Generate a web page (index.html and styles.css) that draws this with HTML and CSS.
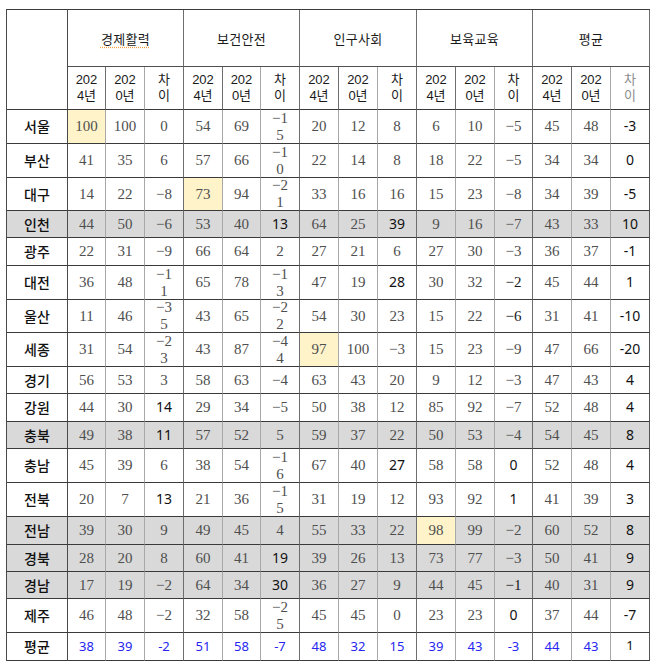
FILE: index.html
```html
<!DOCTYPE html>
<html lang="ko">
<head>
<meta charset="utf-8">
<title>지역별 지표</title>
<link rel="stylesheet" href="styles.css">
</head>
<body>
<div class="sheet">
  <div class="row head">
    <div class="corner"></div>
    <div class="grp"><span class="spell">경제활력</span></div>
    <div class="grp">보건안전</div>
    <div class="grp">인구사회</div>
    <div class="grp">보육교육</div>
    <div class="grp">평균</div>
  </div>
  <div class="row sub">
    <div>202<br>4년</div><div>202<br>0년</div><div>차<br>이</div>
    <div>202<br>4년</div><div>202<br>0년</div><div>차<br>이</div>
    <div>202<br>4년</div><div>202<br>0년</div><div>차<br>이</div>
    <div>202<br>4년</div><div>202<br>0년</div><div>차<br>이</div>
    <div>202<br>4년</div><div>202<br>0년</div><div class="dim">차<br>이</div>
  </div>

  <div class="row">
    <div class="lab">서울</div>
    <div class="y">100</div><div>100</div><div>0</div>
    <div>54</div><div>69</div><div>−1<br>5</div>
    <div>20</div><div>12</div><div>8</div>
    <div>6</div><div>10</div><div>−5</div>
    <div>45</div><div>48</div><div class="k">-3</div>
  </div>
  <div class="row">
    <div class="lab">부산</div>
    <div>41</div><div>35</div><div>6</div>
    <div>57</div><div>66</div><div>−1<br>0</div>
    <div>22</div><div>14</div><div>8</div>
    <div>18</div><div>22</div><div>−5</div>
    <div>34</div><div>34</div><div class="k">0</div>
  </div>
  <div class="row">
    <div class="lab">대구</div>
    <div>14</div><div>22</div><div>−8</div>
    <div class="y">73</div><div>94</div><div>−2<br>1</div>
    <div>33</div><div>16</div><div>16</div>
    <div>15</div><div>23</div><div>−8</div>
    <div>34</div><div>39</div><div class="k">-5</div>
  </div>
  <div class="row sh">
    <div class="lab">인천</div>
    <div>44</div><div>50</div><div>−6</div>
    <div>53</div><div>40</div><div class="k">13</div>
    <div>64</div><div>25</div><div class="k">39</div>
    <div>9</div><div>16</div><div>−7</div>
    <div>43</div><div>33</div><div class="k">10</div>
  </div>
  <div class="row">
    <div class="lab">광주</div>
    <div>22</div><div>31</div><div>−9</div>
    <div>66</div><div>64</div><div>2</div>
    <div>27</div><div>21</div><div>6</div>
    <div>27</div><div>30</div><div>−3</div>
    <div>36</div><div>37</div><div class="k">-1</div>
  </div>
  <div class="row">
    <div class="lab">대전</div>
    <div>36</div><div>48</div><div>−1<br>1</div>
    <div>65</div><div>78</div><div>−1<br>3</div>
    <div>47</div><div>19</div><div class="k">28</div>
    <div>30</div><div>32</div><div class="dk">−2</div>
    <div>45</div><div>44</div><div class="k">1</div>
  </div>
  <div class="row">
    <div class="lab">울산</div>
    <div>11</div><div>46</div><div>−3<br>5</div>
    <div>43</div><div>65</div><div>−2<br>2</div>
    <div>54</div><div>30</div><div>23</div>
    <div>15</div><div>22</div><div class="dk">−6</div>
    <div>31</div><div>41</div><div class="k">-10</div>
  </div>
  <div class="row">
    <div class="lab">세종</div>
    <div>31</div><div>54</div><div>−2<br>3</div>
    <div>43</div><div>87</div><div>−4<br>4</div>
    <div class="y">97</div><div>100</div><div>−3</div>
    <div>15</div><div>23</div><div>−9</div>
    <div>47</div><div>66</div><div class="k">-20</div>
  </div>
  <div class="row">
    <div class="lab">경기</div>
    <div>56</div><div>53</div><div>3</div>
    <div>58</div><div>63</div><div>−4</div>
    <div>63</div><div>43</div><div>20</div>
    <div>9</div><div>12</div><div>−3</div>
    <div>47</div><div>43</div><div class="k">4</div>
  </div>
  <div class="row">
    <div class="lab">강원</div>
    <div>44</div><div>30</div><div class="k">14</div>
    <div>29</div><div>34</div><div>−5</div>
    <div>50</div><div>38</div><div>12</div>
    <div>85</div><div>92</div><div>−7</div>
    <div>52</div><div>48</div><div class="k">4</div>
  </div>
  <div class="row sh">
    <div class="lab">충북</div>
    <div>49</div><div>38</div><div class="k">11</div>
    <div>57</div><div>52</div><div>5</div>
    <div>59</div><div>37</div><div>22</div>
    <div>50</div><div>53</div><div>−4</div>
    <div>54</div><div>45</div><div class="k">8</div>
  </div>
  <div class="row">
    <div class="lab">충남</div>
    <div>45</div><div>39</div><div>6</div>
    <div>38</div><div>54</div><div>−1<br>6</div>
    <div>67</div><div>40</div><div class="k">27</div>
    <div>58</div><div>58</div><div class="k">0</div>
    <div>52</div><div>48</div><div class="k">4</div>
  </div>
  <div class="row">
    <div class="lab">전북</div>
    <div>20</div><div>7</div><div class="k">13</div>
    <div>21</div><div>36</div><div>−1<br>5</div>
    <div>31</div><div>19</div><div>12</div>
    <div>93</div><div>92</div><div class="k">1</div>
    <div>41</div><div>39</div><div class="k">3</div>
  </div>
  <div class="row sh">
    <div class="lab">전남</div>
    <div>39</div><div>30</div><div>9</div>
    <div>49</div><div>45</div><div>4</div>
    <div>55</div><div>33</div><div>22</div>
    <div class="y">98</div><div>99</div><div>−2</div>
    <div>60</div><div>52</div><div class="k">8</div>
  </div>
  <div class="row sh">
    <div class="lab">경북</div>
    <div>28</div><div>20</div><div>8</div>
    <div>60</div><div>41</div><div class="k">19</div>
    <div>39</div><div>26</div><div>13</div>
    <div>73</div><div>77</div><div>−3</div>
    <div>50</div><div>41</div><div class="k">9</div>
  </div>
  <div class="row sh">
    <div class="lab">경남</div>
    <div>17</div><div>19</div><div>−2</div>
    <div>64</div><div>34</div><div class="k">30</div>
    <div>36</div><div>27</div><div>9</div>
    <div>44</div><div>45</div><div class="dk">−1</div>
    <div>40</div><div>31</div><div class="k">9</div>
  </div>
  <div class="row">
    <div class="lab">제주</div>
    <div>46</div><div>48</div><div>−2</div>
    <div>32</div><div>58</div><div>−2<br>5</div>
    <div>45</div><div>45</div><div>0</div>
    <div>23</div><div>23</div><div class="k">0</div>
    <div>37</div><div>44</div><div class="k">-7</div>
  </div>
  <div class="row avg">
    <div class="lab">평균</div>
    <div class="bl">38</div><div class="bl">39</div><div class="bl">-2</div>
    <div class="bl">51</div><div class="bl">58</div><div class="bl">-7</div>
    <div class="bl">48</div><div class="bl">32</div><div class="bl">15</div>
    <div class="bl">39</div><div class="bl">43</div><div class="bl">-3</div>
    <div class="bl">44</div><div class="bl">43</div><div class="k">1</div>
  </div>
</div>
</body>
</html>
```

FILE: styles.css
```css
html, body {
  margin: 0;
  padding: 0;
  background: #ffffff;
}

.sheet {
  display: grid;
  width: max-content;
  margin: 9px 0 0 6px;
  border-top: 1px solid #3a3a3a;
  border-left: 1px solid #4a4a4a;
  grid-template-columns: 61px 38px 39px 39px 39px 38px 39px 39px 39px 39px 39px 39px 38px 39px 39px 39px;
  grid-template-rows: 57px 43px 34px 34px 33px 27px 28px 34px 33px 34px 27px 28px 27px 34px 34px 28px 27px 27px 34px 28px;
}

.row {
  display: contents;
}

.row > div {
  box-sizing: border-box;
  display: flex;
  align-items: center;
  justify-content: center;
  text-align: center;
  border-right: 1px solid #a8a8a8;
  border-bottom: 1px solid #3a3a3a;
  font-family: "Liberation Serif", "Noto Sans CJK KR", serif;
  font-size: 15px;
  line-height: 17px;
  color: #4f4f4f;
  background: #ffffff;
}

/* darker vertical line after each group and after the label column */
.row > :nth-child(3n+1) {
  border-right-color: #6e6e6e;
}
.row > .lab {
  border-right-color: #4a4a4a;
}
.row > :last-child {
  border-right-color: #555555;
}

/* header rows */
.head > div {
  font-family: "Noto Sans CJK KR", "Noto Sans", sans-serif;
  color: #1a1a1a;
}
.head > .corner {
  grid-row: span 2;
  border-right-color: #4a4a4a;
}
.head > .grp {
  grid-column: span 3;
  font-size: 13px;
  letter-spacing: 0.3px;
  border-right-color: #6e6e6e;
  border-bottom-color: #505050;
}
.sub > div {
  font-family: "Liberation Sans", "Noto Sans CJK KR", sans-serif;
  color: #1a1a1a;
  font-size: 13px;
  line-height: 16px;
  border-right-color: #a8a8a8;
}
.sub > :nth-child(3n) {
  border-right-color: #6e6e6e;
}
.sub > .dim {
  color: #8c8c8c;
  border-right-color: #555555;
}

.spell {
  text-decoration: underline dotted #f0a040;
  text-underline-offset: 3px;
}

/* label column */
.row > .lab {
  font-family: "Noto Sans CJK KR", "Noto Sans", sans-serif;
  font-size: 14px;
  font-weight: 500;
  color: #111111;
}

/* value variants */
.row > .k {
  font-family: "Noto Sans", "Liberation Sans", sans-serif;
  font-size: 14px;
  color: #111111;
  padding-bottom: 2px;
}
.row > .dk {
  color: #1a1a1a;
}
.row > .bl {
  font-family: "Noto Sans", "Liberation Sans", sans-serif;
  font-size: 13px;
  color: #2626f0;
}
.avg > .k {
  font-size: 13px;
}

.row.sh > div {
  background: #d9d9d9;
}
.row > .y,
.row.sh > .y {
  background: #fff3c9;
}
```
